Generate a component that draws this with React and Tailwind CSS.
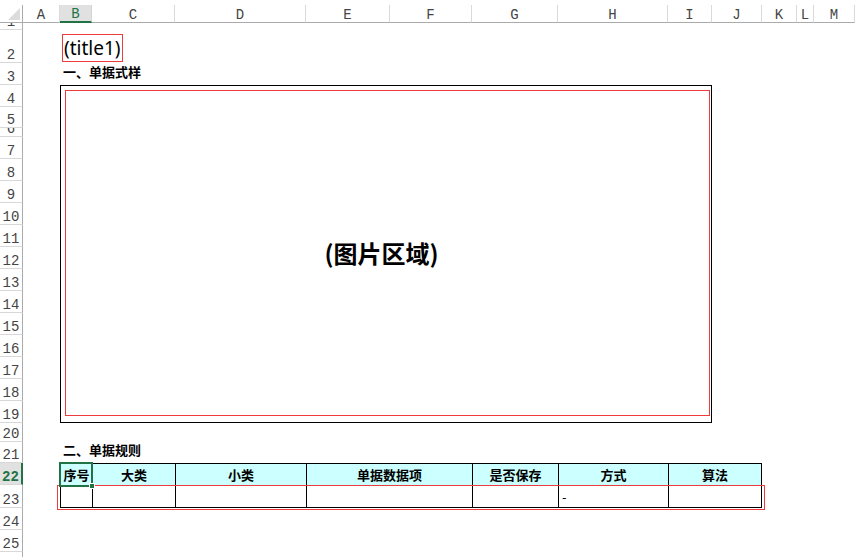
import React from 'react';

// column header letters, widths include the 1px separator
const columns = [
  { label: 'A', w: 'w-[37px]' },
  { label: 'B', w: 'w-[32px]', active: true },
  { label: 'C', w: 'w-[83px]' },
  { label: 'D', w: 'w-[131px]' },
  { label: 'E', w: 'w-[84px]' },
  { label: 'F', w: 'w-[82px]' },
  { label: 'G', w: 'w-[86px]' },
  { label: 'H', w: 'w-[110px]' },
  { label: 'I', w: 'w-[44px]' },
  { label: 'J', w: 'w-[50px]' },
  { label: 'K', w: 'w-[35px]' },
  { label: 'L', w: 'w-[17px]' },
  { label: 'M', w: 'flex-1' },
];

const rows = [
  { n: 1, h: 'h-[7px]' },
  { n: 2, h: 'h-[33px]' },
  { n: 3, h: 'h-[22px]' },
  { n: 4, h: 'h-[22px]' },
  { n: 5, h: 'h-[21px]' },
  { n: 6, h: 'h-[9px]' },
  { n: 7, h: 'h-[22px]' },
  { n: 8, h: 'h-[22px]' },
  { n: 9, h: 'h-[22px]' },
  { n: 10, h: 'h-[22px]' },
  { n: 11, h: 'h-[22px]' },
  { n: 12, h: 'h-[22px]' },
  { n: 13, h: 'h-[22px]' },
  { n: 14, h: 'h-[22px]' },
  { n: 15, h: 'h-[22px]' },
  { n: 16, h: 'h-[22px]' },
  { n: 17, h: 'h-[22px]' },
  { n: 18, h: 'h-[22px]' },
  { n: 19, h: 'h-[22px]' },
  { n: 20, h: 'h-[19px]' },
  { n: 21, h: 'h-[21px]' },
  { n: 22, h: 'h-[22px]', active: true },
  { n: 23, h: 'h-[23px]' },
  { n: 24, h: 'h-[22px]' },
  { n: 25, h: 'h-[22px]' },
  { n: 26, h: 'h-[22px]' },
];

const cjk = { fontFamily: '"Noto Sans CJK SC", "Noto Sans", sans-serif' };
const mono = { fontFamily: '"Liberation Mono", monospace' };

const headCells = [
  { text: '序号', pos: 'col-[2/3]' },
  { text: '大类', pos: 'col-[3/4]' },
  { text: '小类', pos: 'col-[4/5]' },
  { text: '单据数据项', pos: 'col-[5/7]' },
  { text: '是否保存', pos: 'col-[7/8]' },
  { text: '方式', pos: 'col-[8/9]' },
  { text: '算法', pos: 'col-[9/11] border-r' },
];

const bodyCells = [
  { text: '', pos: 'col-[2/3]' },
  { text: '', pos: 'col-[3/4]' },
  { text: '', pos: 'col-[4/5]' },
  { text: '', pos: 'col-[5/7]' },
  { text: '', pos: 'col-[7/8]' },
  { text: '-', pos: 'col-[8/9]' },
  { text: '', pos: 'col-[9/11] border-r' },
];

function ColumnHeader() {
  return (
    <div className="flex h-[23px] items-end shrink-0 bg-white" style={mono}>
      <div className="w-[23px] h-[18px] border-r border-b border-[#ababab] flex items-end justify-end pr-[2px] pb-[2px]">
        <svg width="12" height="12" viewBox="0 0 12 12">
          <polygon points="12,0 12,12 0,12" fill="#dcdcdc" />
        </svg>
      </div>
      {columns.map(c => (
        <div
          key={c.label}
          className={`${c.w} h-[18px] flex items-end justify-center text-[14px] leading-[12px] pb-[1px] ${
            c.active
              ? 'bg-[#e1e1e1] text-[#217346] border-b-2 border-b-[#217346] border-r border-r-[#d4d4d4]'
              : 'text-[#444] border-b border-b-[#ababab] border-r border-r-[#dadada]'
          }`}
        >
          {c.label}
        </div>
      ))}
    </div>
  );
}

function RowHeader() {
  return (
    <div className="w-[23px] shrink-0 flex flex-col" style={mono}>
      {rows.map(r => (
        <div
          key={r.n}
          className={`${r.h} shrink-0 overflow-hidden flex items-end justify-center text-[14px] leading-[14px] border-b border-b-[#d8d8d8] ${
            r.active
              ? 'bg-[#e1e1e1] text-[#217346] font-bold border-r-2 border-r-[#217346]'
              : 'text-[#444] border-r border-r-[#ababab]'
          }`}
        >
          {r.n}
        </div>
      ))}
    </div>
  );
}

function Sheet() {
  return (
    <div
      className="flex-1 grid grid-cols-[37px_32px_83px_131px_84px_82px_86px_110px_44px_50px_35px_17px_1fr] grid-rows-[7px_33px_22px_22px_21px_9px_22px_22px_22px_22px_22px_22px_22px_22px_22px_22px_22px_22px_22px_19px_21px_22px_23px_22px_22px_22px] bg-white text-black"
      style={cjk}
    >
      {/* B2 title */}
      <div className="col-[2/5] row-[2/3] flex items-start">
        <div
          className="mt-[4px] ml-[2px] h-[28px] px-[1px] flex items-center border border-[#ee3b3b] text-[19px] leading-none text-black"
          style={{ fontFamily: '"Noto Sans", sans-serif' }}
        >
          (title1)
        </div>
      </div>

      {/* section 1 */}
      <div className="col-[2/6] row-[3/4] flex items-end pb-[6px] pl-[3px] text-[13px] leading-[14px] font-bold whitespace-nowrap">
        一、单据式样
      </div>

      {/* picture area B4:I19 */}
      <div className="col-[2/10] row-[4/20] border border-black pl-[4px] pt-[4px] pr-[1px] pb-[6px] flex">
        <div className="flex-1 border border-[#ee3b3b] flex items-center justify-center pr-[12px]">
          <span className="text-[24px] font-bold leading-none">(图片区域)</span>
        </div>
      </div>

      {/* section 2 */}
      <div className="col-[2/6] row-[21/22] flex items-end pb-[6px] pl-[3px] text-[13px] leading-[14px] font-bold whitespace-nowrap">
        二、单据规则
      </div>

      {/* rules table header */}
      {headCells.map(c => (
        <div
          key={c.text}
          className={`${c.pos} row-[22/23] bg-[#ccffff] border-l border-t border-black flex items-center justify-center text-[13px] leading-[14px] font-bold whitespace-nowrap`}
        >
          {c.text}
        </div>
      ))}
      {bodyCells.map((c, i) => (
        <div
          key={i}
          className={`${c.pos} row-[23/24] border-l border-t border-b border-black flex items-center pl-[3px] text-[13px] leading-[14px]`}
        >
          {c.text}
        </div>
      ))}

      {/* active cell selection on B22 */}
      <div className="col-[2/3] row-[22/23] relative -ml-[1px] -mt-[1px] -mr-[1px] -mb-[2px] border-2 border-[#217346] pointer-events-none">
        <div className="absolute -right-[4px] -bottom-[4px] w-[6px] h-[6px] bg-[#217346] border border-white" />
      </div>

      {/* red outline around data row */}
      <div className="col-[2/11] row-[23/24] -ml-[3px] -mr-[3px] -mb-[2px] border border-[#ee3b3b] pointer-events-none" />
    </div>
  );
}

export default function App() {
  return (
    <div className="h-screen w-full overflow-hidden bg-white flex flex-col">
      <ColumnHeader />
      <div className="flex flex-1 min-h-0">
        <RowHeader />
        <Sheet />
      </div>
    </div>
  );
}
